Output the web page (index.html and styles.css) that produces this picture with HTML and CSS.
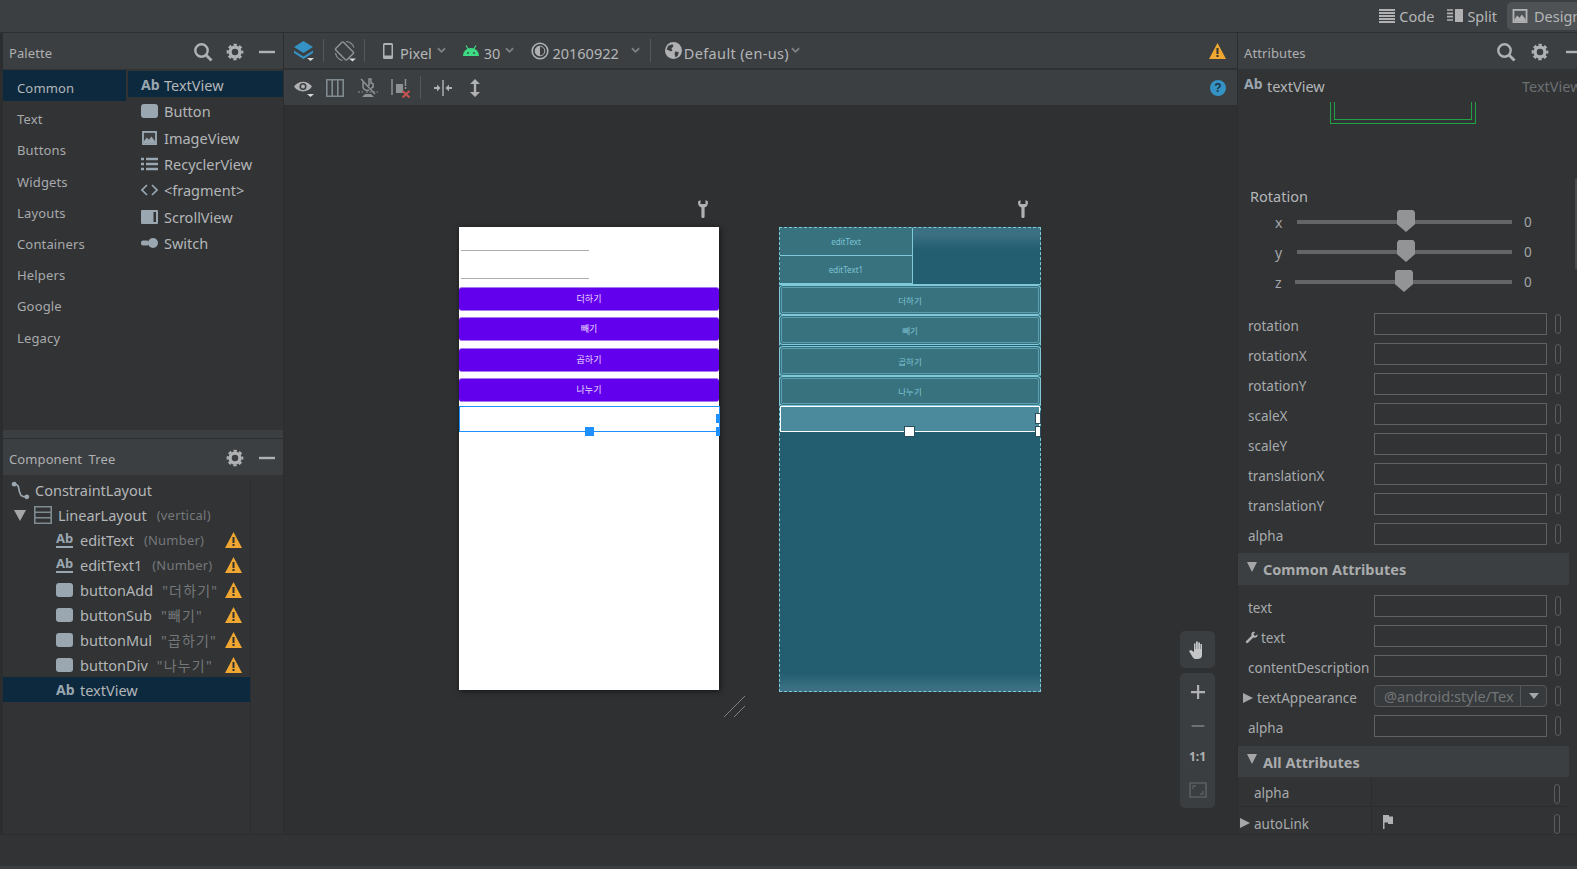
FILE: index.html
```html
<!DOCTYPE html>
<html lang="en">
<head>
<meta charset="utf-8">
<title>Layout Editor</title>
<link rel="stylesheet" href="styles.css">
</head>
<body>
<svg class="sprite" xmlns="http://www.w3.org/2000/svg">
  <symbol id="search" viewBox="0 0 20 20"><circle cx="8.5" cy="8.5" r="6.2" fill="none" stroke="#afb1b3" stroke-width="2.4"/><path d="M13 13l5.5 5.5" stroke="#afb1b3" stroke-width="2.8"/></symbol>
  <symbol id="gear" viewBox="-1 -1 22 22"><circle cx="10" cy="10" r="5.4" fill="none" stroke="#afb1b3" stroke-width="3.6"/><circle cx="10" cy="10" r="8" fill="none" stroke="#afb1b3" stroke-width="2.4" stroke-dasharray="3.6 2.68" stroke-dashoffset="1.8"/></symbol>
  <symbol id="minus" viewBox="0 0 20 20"><rect x="2" y="8.800" width="16" height="2.400" fill="#afb1b3"/></symbol>
  <symbol id="layers" viewBox="0 0 22 22"><path d="M10.500 1l9.500 6-9.500 6-9.500-6z" fill="#3592c4"/><path d="M1 10.500l9.500 6 9.500-6v2.500l-9.500 6-9.500-6z" fill="#3592c4"/><path d="M14 18h7l-3.500 3z" fill="#d8d8d8"/></symbol>
  <symbol id="rotate" viewBox="0 0 22 22"><rect x="5" y="3" width="11" height="16" rx="1.500" transform="rotate(-45 10.500 11)" fill="none" stroke="#8f9295" stroke-width="1.500"/><path d="M12 1.500a9.500 9.500 0 0 1 8 6M1.500 13a9.500 9.500 0 0 0 7 7.500" fill="none" stroke="#8f9295" stroke-width="1.200"/><path d="M15 18.500h7l-3.500 3z" fill="#d8d8d8"/></symbol>
  <symbol id="phone" viewBox="0 0 10 16"><path d="M1.500 0h7A1.500 1.500 0 0 1 10 1.500v13A1.500 1.500 0 0 1 8.500 16h-7A1.500 1.500 0 0 1 0 14.500v-13A1.500 1.500 0 0 1 1.500 0zM1.500 2v10.500h7V2z" fill="#afb1b3" fill-rule="evenodd"/></symbol>
  <symbol id="android" viewBox="0 0 16 12"><path d="M0 11a8 8 0 0 1 16 0z" fill="#3ddc84"/><path d="M3 .5l2.500 4M13 .5l-2.500 4" stroke="#3ddc84" stroke-width="1.200"/><circle cx="5" cy="8" r=".9" fill="#3c3f41"/><circle cx="11" cy="8" r=".9" fill="#3c3f41"/></symbol>
  <symbol id="theme" viewBox="0 0 18 18"><circle cx="9" cy="9" r="7.800" fill="none" stroke="#afb1b3" stroke-width="1.600"/><path d="M9 4a5 5 0 0 0 0 10z" fill="#afb1b3"/><circle cx="9" cy="9" r="4.800" fill="none" stroke="#afb1b3"/></symbol>
  <symbol id="globe" viewBox="0 0 16 16"><circle cx="8" cy="8" r="8" fill="#afb1b3"/><path d="M3 3.500l4-1.500 1 2-2 2 1 2-2 1-1-1-2.500-1zM9.500 9l3.500.5-1 3.500-2 1.500-1-3z" fill="#3c3f41"/></symbol>
  <symbol id="chev" viewBox="0 0 10 7"><path d="M1 1l4 4 4-4" fill="none" stroke="#7d8083" stroke-width="2"/></symbol>
  <symbol id="warn" viewBox="0 0 17 16"><path d="M8.500 0l8.500 16H0z" fill="#f0a732"/><rect x="7.500" y="5" width="2" height="6" fill="#2f3133"/><rect x="7.500" y="12" width="2" height="2" fill="#2f3133"/></symbol>
  <symbol id="eye" viewBox="0 0 20 18"><path d="M0 6.500c4.500-6.500 13.500-6.500 18 0-4.500 6.500-13.500 6.500-18 0z" fill="#afb1b3"/><circle cx="9" cy="6.500" r="3.500" fill="#3c3f41"/><circle cx="9" cy="6.500" r="1.900" fill="#afb1b3"/><path d="M13 14h7l-3.500 3z" fill="#d8d8d8"/></symbol>
  <symbol id="cols" viewBox="0 0 18 18"><path d="M.8.8h16.400v16.400H.8zM6.200.8v16.400M11.800.8v16.400" fill="none" stroke="#7f8b91" stroke-width="1.600"/></symbol>
  <symbol id="magnet" viewBox="0 0 20 20"><path d="M3 1l14 15" stroke="#8f9295" stroke-width="1.500"/><path d="M11 8V1h2v4c3 0 3 5 0 5" fill="none" stroke="#8f9295" stroke-width="1.500"/><path d="M5 4v5c0 3 4 4 6 3" fill="none" stroke="#8f9295" stroke-width="1.500"/><path d="M0 14h5M8 14h12" stroke="#8f9295" stroke-dasharray="2 1.500"/><path d="M7 16h6l3 3H4z" fill="#8f9295"/></symbol>
  <symbol id="errs" viewBox="0 0 20 20"><path d="M1 1v16" stroke="#8f9295" stroke-width="1.500"/><rect x="5" y="6" width="7" height="9" fill="#8f9295"/><path d="M14.500 1v7M14.500 9v2" stroke="#8f9295" stroke-width="1.500"/><path d="M11.500 13l7 6.500M18.500 13l-7 6.500" stroke="#c75450" stroke-width="2"/></symbol>
  <symbol id="pack" viewBox="0 0 18 16"><rect x="8" y="0" width="2" height="16" fill="#8f9295"/><path d="M0 7h3V4.500L6.500 8 3 11.500V9H0zM18 7h-3V4.500L11.500 8 15 11.500V9h3z" fill="#afb1b3"/></symbol>
  <symbol id="vsize" viewBox="0 0 12 18"><path d="M6 0l5 5H7.200v8H11l-5 5-5-5h3.800V5H1z" fill="#afb1b3"/></symbol>
  <symbol id="lines" viewBox="0 0 16 14"><path d="M0 1h16M0 4h16M0 7h16M0 10h16M0 13h16" stroke="#afb1b3" stroke-width="1.800"/></symbol>
  <symbol id="split" viewBox="0 0 16 14"><path d="M0 1h6M0 4.300h6M0 7.600h6M0 11h6" stroke="#afb1b3" stroke-width="1.700"/><rect x="8" y="0" width="8" height="13" fill="#afb1b3"/></symbol>
  <symbol id="image" viewBox="0 0 16 15"><path d="M0 0h16v15H0z" fill="#9aa7b0"/><path d="M2 2h12v11H2z" fill="#3d4043"/><path d="M2 11l3-4 2.500 2.500L10 6l4 5v2H2z" fill="#9aa7b0"/></symbol>
  <symbol id="image-d" viewBox="0 0 16 15"><path d="M0 0h16v15H0z" fill="#afb1b3"/><path d="M2 2h12v11H2z" fill="#4e5254"/><path d="M2 11l3-4 2.500 2.500L10 6l4 5v2H2z" fill="#afb1b3"/></symbol>
  <symbol id="btn" viewBox="0 0 17 14"><rect width="17" height="14" rx="3" fill="#9aa7b0"/></symbol>
  <symbol id="list" viewBox="0 0 17 14"><path d="M0 2h3M5 2h12M0 7h3M5 7h12M0 12h3M5 12h12" stroke="#9aa7b0" stroke-width="2.400"/></symbol>
  <symbol id="code" viewBox="0 0 17 12"><path d="M6 1L1 6l5 5M11 1l5 5-5 5" fill="none" stroke="#9aa7b0" stroke-width="1.700"/></symbol>
  <symbol id="scroll" viewBox="0 0 17 14"><path d="M1 0h15a1 1 0 0 1 1 1v12a1 1 0 0 1-1 1H1a1 1 0 0 1-1-1V1a1 1 0 0 1 1-1zM12.500 2v10h2.500V2z" fill="#9aa7b0" fill-rule="evenodd"/></symbol>
  <symbol id="switch" viewBox="0 0 17 11"><rect x="0" y="3" width="8" height="5" rx="2" fill="#9aa7b0"/><circle cx="12" cy="5.500" r="5" fill="#9aa7b0"/></symbol>
  <symbol id="conn" viewBox="0 0 18 18"><path d="M3 3c5 0 4 4 5 7s1 5 6 5" fill="none" stroke="#9aa7b0" stroke-width="1.600"/><circle cx="3" cy="3" r="2.300" fill="#9aa7b0"/><circle cx="15" cy="15" r="2.300" fill="#9aa7b0"/></symbol>
  <symbol id="linear" viewBox="0 0 18 18"><path d="M.8.8h16.400v16.400H.8zM.8 6.300h16.400M.8 11.700h16.400" fill="none" stroke="#7f8b91" stroke-width="1.600"/></symbol>
  <symbol id="wrench" viewBox="0 0 10 18"><path d="M0 1.500C0 5 1 7 3.400 7.500V16.500a1.600 1.600 0 0 0 3.200 0V7.500C9 7 10 5 10 1.500L7.500 0v4h-5V0z" fill="#afb1b3"/></symbol>
  <symbol id="wrench2" viewBox="0 0 14 14"><path d="M13.500 3.500l-2.500 2-2-2 2-2.500C8.500 0 6 2 7 5L1 11a1.500 1.500 0 0 0 2 2l6-6c3 1 5-1 4.500-3.500z" fill="#afb1b3"/></symbol>
  <symbol id="hand" viewBox="0 0 20 20"><path d="M1 11l2-1 3 2V3.500h1.500V9H8V1.500h1.800V9h.4V2.500H12V9h.4V4H14v11c0 3-2 4-5 4H7.500C6 19 5 18 4 16z" fill="#c4c6c8"/></symbol>
  <symbol id="plus" viewBox="0 0 14 14"><path d="M6 0h2.200v6H14v2.200H8.200V14H6V8.200H0V6h6z" fill="#afb1b3"/></symbol>
  <symbol id="fit" viewBox="0 0 18 16"><path d="M1 1h16v14H1z" fill="none" stroke="#5c5f61" stroke-width="1.600"/><path d="M4 7V4h3M14 9v3h-3" fill="none" stroke="#5c5f61" stroke-width="1.300"/></symbol>
  <symbol id="flag" viewBox="0 0 10 14"><path d="M0 0h6v1.500h4V9H5V7.500H1.500V14H0z" fill="#afb1b3"/></symbol>
  <symbol id="resize" viewBox="0 0 21 21"><path d="M0 21L21 0M10 21L21 10" stroke="#808284" stroke-width="1"/></symbol>
</svg>

<div class="app">
  <header class="topbar">
    <span class="mode mode-code"><svg class="i16"><use href="#lines"/></svg>Code</span>
    <span class="mode"><svg class="i16"><use href="#split"/></svg>Split</span>
    <span class="mode mode-on"><svg class="i16"><use href="#image-d"/></svg>Design</span>
  </header>

  <main class="main">
    <aside class="left">
      <section class="palette">
        <div class="head">
          <span class="head-title">Palette</span>
          <svg class="h-ic"><use href="#search"/></svg>
          <svg class="h-ic"><use href="#gear"/></svg>
          <svg class="h-ic"><use href="#minus"/></svg>
        </div>
        <div class="pal-body">
          <ul class="cats">
            <li class="cat cat-on">Common</li>
            <li class="cat">Text</li>
            <li class="cat">Buttons</li>
            <li class="cat">Widgets</li>
            <li class="cat">Layouts</li>
            <li class="cat">Containers</li>
            <li class="cat">Helpers</li>
            <li class="cat">Google</li>
            <li class="cat">Legacy</li>
          </ul>
          <ul class="widgets">
            <li class="wid wid-on"><b class="ab">Ab</b>TextView</li>
            <li class="wid"><svg class="wi"><use href="#btn"/></svg>Button</li>
            <li class="wid"><svg class="wi"><use href="#image"/></svg>ImageView</li>
            <li class="wid"><svg class="wi"><use href="#list"/></svg>RecyclerView</li>
            <li class="wid"><svg class="wi"><use href="#code"/></svg>&lt;fragment&gt;</li>
            <li class="wid"><svg class="wi"><use href="#scroll"/></svg>ScrollView</li>
            <li class="wid"><svg class="wi"><use href="#switch"/></svg>Switch</li>
          </ul>
        </div>
      </section>
      <section class="tree">
        <div class="head">
          <span class="head-title head-tree">Component Tree</span>
          <svg class="h-ic"><use href="#gear"/></svg>
          <svg class="h-ic"><use href="#minus"/></svg>
        </div>
        <div class="tree-body">
          <ul class="nodes">
            <li class="node lv0"><svg class="ni"><use href="#conn"/></svg>ConstraintLayout</li>
            <li class="node lv1"><i class="tri tri-d tri-big"></i><svg class="ni"><use href="#linear"/></svg>LinearLayout<span class="sub">(vertical)</span></li>
            <li class="node lv2"><b class="ab ab-u">Ab</b>editText<span class="sub">(Number)</span><svg class="nw"><use href="#warn"/></svg></li>
            <li class="node lv2"><b class="ab ab-u">Ab</b>editText1<span class="sub">(Number)</span><svg class="nw"><use href="#warn"/></svg></li>
            <li class="node lv2"><svg class="ni2"><use href="#btn"/></svg>buttonAdd<span class="sub sub-k">"더하기"</span><svg class="nw"><use href="#warn"/></svg></li>
            <li class="node lv2"><svg class="ni2"><use href="#btn"/></svg>buttonSub<span class="sub sub-k">"빼기"</span><svg class="nw"><use href="#warn"/></svg></li>
            <li class="node lv2"><svg class="ni2"><use href="#btn"/></svg>buttonMul<span class="sub sub-k">"곱하기"</span><svg class="nw"><use href="#warn"/></svg></li>
            <li class="node lv2"><svg class="ni2"><use href="#btn"/></svg>buttonDiv<span class="sub sub-k">"나누기"</span><svg class="nw"><use href="#warn"/></svg></li>
            <li class="node lv2 node-on"><b class="ab ab-sel">Ab</b>textView</li>
          </ul>
        </div>
      </section>
    </aside>

    <section class="center">
      <div class="tb tb1">
        <svg class="t-layers"><use href="#layers"/></svg>
        <i class="div d1"></i>
        <svg class="t-rotate"><use href="#rotate"/></svg>
        <i class="div d2"></i>
        <svg class="t-phone"><use href="#phone"/></svg>
        <span class="t-txt">Pixel</span>
        <svg class="t-chev"><use href="#chev"/></svg>
        <svg class="t-android"><use href="#android"/></svg>
        <span class="t-txt">30</span>
        <svg class="t-chev"><use href="#chev"/></svg>
        <svg class="t-theme"><use href="#theme"/></svg>
        <span class="t-txt">20160922</span>
        <svg class="t-chev t-chev-w"><use href="#chev"/></svg>
        <i class="div d3"></i>
        <svg class="t-globe"><use href="#globe"/></svg>
        <span class="t-txt t-def">Default (en-us)</span>
        <svg class="t-chev t-chev-n"><use href="#chev"/></svg>
        <svg class="t-warn"><use href="#warn"/></svg>
      </div>
      <div class="tb tb2">
        <svg class="b-eye"><use href="#eye"/></svg>
        <svg class="b-cols"><use href="#cols"/></svg>
        <svg class="b-mag"><use href="#magnet"/></svg>
        <svg class="b-err"><use href="#errs"/></svg>
        <i class="div d4"></i>
        <svg class="b-pack"><use href="#pack"/></svg>
        <svg class="b-v"><use href="#vsize"/></svg>
        <span class="b-help">?</span>
      </div>
      <div class="canvas">
        <svg class="wr wr1"><use href="#wrench"/></svg>
        <svg class="wr wr2"><use href="#wrench"/></svg>

        <div class="phone">
          <div class="p-edit"><i class="p-line"></i></div>
          <div class="p-edit"><i class="p-line"></i></div>
          <div class="p-btns">
            <div class="p-btn">더하기</div>
            <div class="p-btn">빼기</div>
            <div class="p-btn">곱하기</div>
            <div class="p-btn">나누기</div>
          </div>
          <div class="p-sel"></div>
        </div>
        <i class="hd hd-c"></i><i class="hd hd-r1"></i><i class="hd hd-r2"></i>
        <svg class="resize"><use href="#resize"/></svg>

        <div class="blue">
          <div class="b-edit">editText</div>
          <div class="b-edit">editText1</div>
          <div class="b-btns">
            <div class="b-btn">더하기</div>
            <div class="b-btn">빼기</div>
            <div class="b-btn">곱하기</div>
            <div class="b-btn">나누기</div>
          </div>
          <div class="b-sel"></div>
        </div>
        <i class="hw hw-c"></i><i class="hw hw-r1"></i><i class="hw hw-r2"></i>

        <div class="zoom">
          <div class="z-box z-hand"><svg class="z-h"><use href="#hand"/></svg></div>
          <div class="z-box z-list">
            <svg class="z-p"><use href="#plus"/></svg>
            <svg class="z-m"><use href="#minus"/></svg>
            <span class="z-11">1:1</span>
            <svg class="z-f"><use href="#fit"/></svg>
          </div>
        </div>
      </div>
    </section>

    <aside class="right">
      <div class="head head-r">
        <span class="head-title">Attributes</span>
        <svg class="h-ic"><use href="#search"/></svg>
        <svg class="h-ic"><use href="#gear"/></svg>
        <svg class="h-ic"><use href="#minus"/></svg>
      </div>
      <div class="attr-body">
        <div class="name-row"><b class="ab ab-name">Ab</b><span class="nm">textView</span><span class="nm-type">TextView</span></div>
        <div class="u-box"></div>
        <div class="rot-title">Rotation</div>
        <div class="slider"><span class="s-l">x</span><div class="s-track"><i class="s-thumb"></i></div><span class="s-v">0</span></div>
        <div class="slider"><span class="s-l">y</span><div class="s-track"><i class="s-thumb"></i></div><span class="s-v">0</span></div>
        <div class="slider slider-z"><span class="s-l">z</span><div class="s-track"><i class="s-thumb"></i></div><span class="s-v">0</span></div>

        <div class="rows rows-top">
          <div class="row"><span class="lbl">rotation</span><i class="inp"></i><i class="pin"></i></div>
          <div class="row"><span class="lbl">rotationX</span><i class="inp"></i><i class="pin"></i></div>
          <div class="row"><span class="lbl">rotationY</span><i class="inp"></i><i class="pin"></i></div>
          <div class="row"><span class="lbl">scaleX</span><i class="inp"></i><i class="pin"></i></div>
          <div class="row"><span class="lbl">scaleY</span><i class="inp"></i><i class="pin"></i></div>
          <div class="row"><span class="lbl">translationX</span><i class="inp"></i><i class="pin"></i></div>
          <div class="row"><span class="lbl">translationY</span><i class="inp"></i><i class="pin"></i></div>
          <div class="row"><span class="lbl">alpha</span><i class="inp"></i><i class="pin"></i></div>
        </div>

        <div class="sec"><i class="tri tri-d"></i>Common Attributes</div>
        <div class="rows rows-common">
          <div class="row"><span class="lbl">text</span><i class="inp"></i><i class="pin"></i></div>
          <div class="row"><span class="lbl lbl-w"><svg class="w2"><use href="#wrench2"/></svg>text</span><i class="inp"></i><i class="pin"></i></div>
          <div class="row"><span class="lbl lbl-c">contentDescription</span><i class="inp"></i><i class="pin"></i></div>
          <div class="row"><span class="lbl lbl-t"><i class="tri tri-r"></i>textAppearance</span><span class="combo"><span class="combo-t">@android:style/Tex</span><span class="combo-b"><i class="combo-a"></i></span></span><i class="pin"></i></div>
          <div class="row"><span class="lbl">alpha</span><i class="inp"></i><i class="pin"></i></div>
        </div>

        <div class="sec sec-all"><i class="tri tri-d"></i>All Attributes</div>
        <div class="all">
          <div class="arow arow-line"><span class="alb">alpha</span><i class="pin"></i></div>
          <div class="arow"><span class="alb"><i class="tri tri-r tri-out"></i>autoLink</span><svg class="flag"><use href="#flag"/></svg><i class="pin"></i></div>
        </div>
      </div>
      <i class="vscroll"></i>
    </aside>
  </main>

  <footer class="status"></footer>
</div>
</body>
</html>
```

FILE: styles.css
```css
* { box-sizing: border-box; }
html, body { margin: 0; padding: 0; }
body {
  background: #3c3f41;
  color: #b4b6b8;
  font-family: "Noto Sans", "Noto Sans CJK KR", sans-serif;
  font-size: 14px;
  overflow: hidden;
}
ul { list-style: none; margin: 0; padding: 0; }
i { display: block; font-style: normal; }
svg { display: block; flex: none; }
.sprite { position: absolute; width: 0; height: 0; }

.app { width: 1577px; height: 869px; display: flex; flex-direction: column; overflow: hidden; }

/* top bar */
.topbar {
  height: 33px;
  flex: none;
  display: flex;
  justify-content: flex-end;
  align-items: center;
  background: #3c3f41;
  border-bottom: 1px solid #2d2f30;
}
.mode { display: flex; align-items: center; gap: 4px; height: 28px; margin-right: 10px; font-size: 14.500px; color: #b4b6b8; }
.mode-code { margin-right: 13px; }
.i16 { width: 16px; height: 14px; }
.mode-on { background: #4e5254; border-radius: 5px 0 0 5px; padding-left: 5px; gap: 6px; width: 80px; margin-right: -10px; }

/* main */
.main { flex: 1; min-height: 0; display: flex; padding-left: 3px; background: #2b2d2e; gap: 1px; }

.head { height: 36px; flex: none; display: flex; align-items: center; background: #3c3f41; padding: 2px 6px 0 6px; }
.head-title { flex: 1; font-size: 13px; letter-spacing: .1px; color: #aeb0b2; margin-top: 1px; }
.head-tree { word-spacing: 3px; }
.h-ic { width: 20px; height: 20px; margin-left: 12px; }

.left { width: 280px; flex: none; display: flex; flex-direction: column; background: #3c3f41; }
.palette { height: 397px; flex: none; display: flex; flex-direction: column; background: #313335; }
.pal-body { flex: 1; display: flex; gap: 2px; padding-top: 1px; }
.cats { width: 123px; flex: none; }
.cat { height: 31.200px; line-height: 31px; padding-left: 14px; padding-top: 3px; font-size: 13px; color: #a8aaac; letter-spacing: .15px; }
.cat-on { background: #0d293e; color: #b4b6b8; }
.widgets { flex: 1; padding-top: 1px; }
.wid { height: 26.300px; display: flex; align-items: center; padding: 2px 0 0 13px; font-size: 14.500px; }
.wid-on { background: #0d293e; }
.ab { font-family: "Noto Sans", sans-serif; font-weight: 700; color: #9aa7b0; font-size: 14px; line-height: 1; width: 23px; flex: none; }
.wi { width: 17px; height: 14px; margin-right: 6px; }

.tree { flex: 1; min-height: 0; margin-top: 8px; display: flex; flex-direction: column; background: #313335; border-top: 1px solid #2b2d2e; }
.tree-body { flex: 1; padding-top: 3px; }
.nodes { width: 248px; height: 100%; border-right: 1px solid #2b2d2e; }
.node { height: 24.900px; display: flex; align-items: center; font-size: 14.500px; white-space: nowrap; }
.lv0 { padding-left: 8px; }
.lv1 { padding-left: 11px; }
.lv2 { padding-left: 53px; }
.node-on { background: #0d293e; }
.ni { width: 19px; height: 19px; margin-right: 5px; }
.lv1 .ni { margin-right: 6px; width: 18px; height: 18px; }
.ni2 { width: 17px; height: 14px; margin-right: 7px; }
.ab-u { border-bottom: 2px solid #9aa7b0; width: 17px; margin-right: 7px; font-size: 13px; padding-bottom: 1px; }
.ab-sel { width: 24px; }
.sub { font-size: 13px; color: #75787a; margin-left: 10px; letter-spacing: .2px; }
.sub-k { font-size: 14px; letter-spacing: 1.200px; margin-left: 9px; }
.nw { width: 17px; height: 16px; margin-left: auto; margin-right: 8px; }
.tri { width: 0; height: 0; }
.tri-d { border-left: 5.500px solid transparent; border-right: 5.500px solid transparent; border-top: 10px solid #a4a6a8; margin-right: 8px; }
.tri-big { border-left-width: 6px; border-right-width: 6px; border-top-width: 11px; margin-right: 8px; }
.tri-r { border-top: 5px solid transparent; border-bottom: 5px solid transparent; border-left: 10px solid #a4a6a8; margin-right: 4px; }

/* center */
.center { width: 953px; flex: none; display: flex; flex-direction: column; position: relative; background: #2f3032; }
.tb { flex: none; display: flex; align-items: center; background: #3c3f41; }
.tb1 { height: 35px; padding-left: 9px; }
.tb2 { height: 35px; margin-top: 2px; padding-left: 10px; }
.t-layers { width: 22px; height: 22px; }
.div { width: 1px; height: 23px; background: #55585a; }
.d1 { margin-left: 8px; }
.d2 { margin-left: 8px; }
.d3 { margin-left: 10px; }
.d4 { margin-left: 9px; }
.t-rotate { width: 22px; height: 22px; margin-left: 10px; }
.t-phone { width: 10px; height: 16px; margin-left: 18px; margin-right: 7px; }
.t-txt { font-size: 14.500px; white-space: nowrap; margin-top: 4px; }
.t-def { letter-spacing: .35px; }
.t-chev { width: 9px; height: 7px; margin-left: 5px; }
.t-chev-w { margin-left: 12px; }
.t-chev-n { margin-left: 2px; }
.t-android { width: 16px; height: 12px; margin-left: 17px; margin-right: 5px; }
.t-theme { width: 18px; height: 18px; margin-left: 17px; margin-right: 3px; }
.t-globe { width: 17px; height: 17px; margin-left: 14px; margin-right: 2px; }
.t-warn { width: 17px; height: 16px; margin-left: auto; margin-right: 11px; }
.b-eye { width: 20px; height: 18px; margin-top: 3px; }
.b-cols { width: 18px; height: 18px; margin-left: 12px; }
.b-mag { width: 20px; height: 20px; margin-left: 14px; }
.b-err { width: 20px; height: 20px; margin-left: 13px; }
.b-pack { width: 18px; height: 16px; margin-left: 13px; }
.b-v { width: 12px; height: 18px; margin-left: 17px; }
.b-help {
  width: 16px; height: 16px; margin-left: auto; margin-right: 11px;
  border-radius: 50%; background: #3592c4; color: #1c3445;
  font: bold 12px/16px "Liberation Sans", sans-serif; text-align: center;
}

.canvas { flex: 1; position: relative; overflow: hidden; }
.wr { position: absolute; width: 10px; height: 18px; top: 95px; }
.wr1 { left: 414px; }
.wr2 { left: 734px; }

.phone { position: absolute; left: 175px; top: 122px; width: 260px; height: 463px; background: #fff; box-shadow: 1px 1px 6px rgba(0, 0, 0, .6); }
.p-edit { height: 28px; padding: 23px 130px 0 2px; }
.p-line { height: 1px; background: #aeaeae; }
.p-btns { margin-top: 4px; display: flex; flex-direction: column; gap: 6.300px; }
.p-btn { height: 24px; line-height: 22px; text-align: center; background: #6200ee; border-top: 1px solid #a878f0; border-bottom: 1px solid #a878f0; border-radius: 3px; color: #eadcff; font-size: 9px; }
.p-sel { height: 26px; margin-top: 4px; width: 261px; border: 1px solid #1e90ff; }
.hd { position: absolute; background: #1e90ff; }
.hd-c { left: 301px; top: 322px; width: 9px; height: 9px; }
.hd-r1 { left: 432px; top: 309px; width: 4px; height: 9px; }
.hd-r2 { left: 432px; top: 322px; width: 4px; height: 9px; }
.resize { position: absolute; left: 440px; top: 591px; width: 21px; height: 21px; }

.blue {
  position: absolute; left: 495px; top: 122px; width: 262px; height: 465px;
  background: linear-gradient(#3a7082 0, #3a7082 6px, #235d70 22px, #235d70 445px, #3a7082 460px);
  border: 1px dashed #7fc9da;
}
.b-edit { width: 133px; height: 28px; line-height: 27px; text-align: center; font-size: 8px; color: #7cc3d3; background: #39727f; border-right: 1px solid #7fc9da; border-bottom: 1px solid #7fc9da; }
.b-btns { border-top: 1px solid #7fc9da; padding-top: 2px; display: flex; flex-direction: column; gap: 4.300px; }
.b-btn { height: 26px; margin: 0 1px; line-height: 25px; text-align: center; font-size: 8.500px; color: #7cc3d3; background: #39727f; border: 1px solid #5b9eb0; border-radius: 2px; box-shadow: 0 0 0 1px #39727f, 0 0 0 2px #7fc9da; }
.b-sel { height: 26px; margin-top: 2px; background: #4b8a9c; border: 1px solid #fff; position: relative; }
.hw { position: absolute; background: #fff; border: 1px solid #2a4f5c; }
.hw-c { left: 620px; top: 321px; width: 11px; height: 11px; }
.hw-r1 { left: 751px; top: 308px; width: 6px; height: 11px; }
.hw-r2 { left: 751px; top: 321px; width: 6px; height: 11px; }

.zoom { position: absolute; left: 896px; top: 526px; width: 35px; display: flex; flex-direction: column; gap: 5px; }
.z-box { background: #3b3e40; border-radius: 5px; display: flex; flex-direction: column; align-items: center; }
.z-hand { height: 37px; justify-content: center; }
.z-h { width: 20px; height: 20px; }
.z-list { height: 135px; padding-top: 12px; }
.z-p { width: 14px; height: 14px; }
.z-m { width: 16px; height: 16px; margin-top: 18.500px; opacity: .45; }
.z-11 { font-size: 12px; font-weight: 700; color: #afb1b3; margin-top: 15.500px; line-height: 16px; }
.z-f { width: 18px; height: 16px; margin-top: 17px; }

/* right */
.right { flex: 1; min-width: 0; position: relative; display: flex; flex-direction: column; background: #313335; overflow: hidden; }
.head-r { padding-right: 0; padding-left: 6px; }
.head-r .h-ic + .h-ic { margin-left: 14px; }
.head-r .h-ic:last-child { margin-right: -7px; }
.attr-body { flex: 1; min-height: 0; overflow: hidden; }
.name-row { height: 33px; display: flex; align-items: center; padding-left: 6px; white-space: nowrap; }
.ab-name { width: 23px; font-size: 14px; margin-top: -3px; }
.nm { font-size: 14.500px; }
.nm-type { margin-left: auto; width: 55px; overflow: hidden; color: #6d7072; font-size: 14.500px; flex: none; }
.u-box { width: 146px; height: 22px; margin-left: 92px; border: 1px solid #22a045; border-top: 0; position: relative; }
.u-box::after { content: ""; position: absolute; left: 3px; right: 3px; top: 0; bottom: 3px; border: 1px solid #22a045; border-top: 0; }
.rot-title { margin: 62px 0 0 12px; height: 20px; line-height: 20px; font-size: 14.500px; }
.slider { height: 30px; display: flex; align-items: center; position: relative; top: 1px; }
.s-l { width: 59px; padding-left: 37px; font-size: 14px; color: #a4a6a8; flex: none; }
.s-track { width: 215px; height: 4px; background: #636567; position: relative; }
.slider-z .s-l { width: 57px; }
.slider-z .s-track { width: 217px; }
.s-thumb { position: absolute; left: 100px; top: -10px; width: 18px; height: 22px; background: #929495; clip-path: polygon(10% 0, 90% 0, 100% 10%, 100% 65%, 50% 100%, 0 65%, 0 10%); }
.s-v { margin-left: 12px; font-size: 13.500px; color: #a4a6a8; }

.rows { display: flex; flex-direction: column; }
.rows-top { margin-top: 13px; }
.rows-common { margin-top: 6px; }
.row { height: 30px; display: flex; align-items: center; padding-left: 10px; }
.lbl { width: 126px; flex: none; padding-top: 3px; font-size: 13.500px; color: #a8aaac; white-space: nowrap; display: flex; align-items: center; }
.lbl-w { margin-left: -3px; width: 129px; }
.lbl-t { margin-left: -5px; width: 131px; }
.w2 { width: 13px; height: 13px; margin-right: 3px; }
.inp { width: 173px; height: 22px; border: 1px solid #5f6163; flex: none; }
.pin { width: 6px; height: 20px; border: 1px solid #5a5c5e; border-radius: 3px; margin-left: 8px; flex: none; }
.combo { width: 173px; height: 22px; flex: none; display: flex; border: 1px solid #56585a; border-radius: 4px; background: #383b3d; font-size: 14.500px; color: #737577; overflow: hidden; }
.combo-t { width: 139px; margin-right: 6px; padding-left: 9px; overflow: hidden; white-space: nowrap; line-height: 20px; flex: none; }
.combo-b { flex: 1; border-left: 1px solid #56585a; display: flex; align-items: center; justify-content: center; }
.combo-a { width: 0; height: 0; border-left: 5.500px solid transparent; border-right: 5.500px solid transparent; border-top: 6px solid #a4a6a8; }
.sec { height: 32px; width: 331px; margin-top: 4px; background: #3c3f41; display: flex; align-items: center; padding-left: 9px; font-size: 14.500px; font-weight: 700; color: #a9abad; }
.sec .tri-d { margin-top: -5px; margin-right: 6px; }
.sec-all { margin-top: 5px; height: 31px; }
.all { width: 331px; }
.arow { height: 30px; display: flex; align-items: center; position: relative; }
.arow-line { border-bottom: 1px solid #2b2d2e; }
.arow::before { content: ""; position: absolute; left: 133px; top: 0; bottom: 0; width: 1px; background: #2b2d2e; }
.alb { width: 145px; padding: 3px 0 0 16px; font-size: 13.500px; color: #a8aaac; flex: none; display: flex; align-items: center; position: relative; }
.tri-out { position: absolute; left: 2px; top: 6px; }
.flag { width: 10px; height: 14px; margin-top: -1px; }
.arow .pin { position: absolute; left: 316px; margin-left: 0; top: 7px; }
.vscroll { position: absolute; right: 0; top: 146px; width: 2px; height: 90px; background: #4a4c4e; }

.status { height: 35px; flex: none; background: #313335; border-top: 1px solid #2b2d2e; border-bottom: 3px solid #3c3f41; }
```
